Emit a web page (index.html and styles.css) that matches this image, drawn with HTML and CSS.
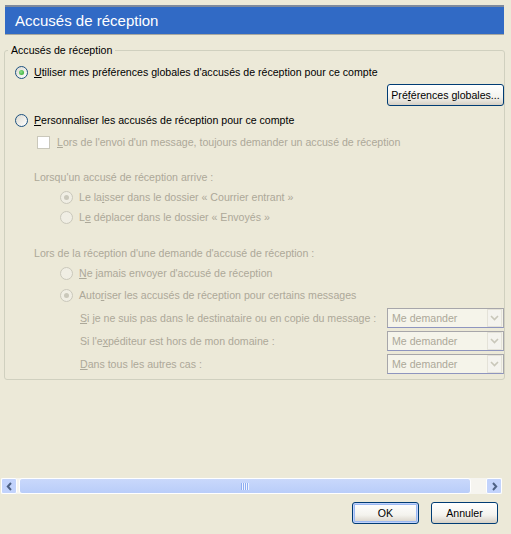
FILE: index.html
```html
<!DOCTYPE html>
<html lang="fr">
<head>
    <meta charset="UTF-8">
    <title>Accusés de réception</title>
    <link rel="stylesheet" href="styles.css">
</head>
<body>
    <div class="titlebar">Accusés de réception</div>

    <fieldset class="group">
        <legend>Accusés de réception</legend>

        <div class="row opt first">
            <span class="radio checked"></span>
            <span><u>U</u>tiliser mes préférences globales d'accusés de réception pour ce compte</span>
        </div>
        <div class="row btn-row">
            <button class="btn wide">Pré<u>f</u>érences globales...</button>
        </div>
        <div class="row opt second">
            <span class="radio"></span>
            <span><u>P</u>ersonnaliser les accusés de réception pour ce compte</span>
        </div>
        <div class="row opt check-row dim">
            <span class="check"></span>
            <span><u>L</u>ors de l'envoi d'un message, toujours demander un accusé de réception</span>
        </div>

        <div class="row caption dim">Lorsqu'un accusé de réception arrive :</div>
        <div class="row opt sub dim">
            <span class="radio off checked"></span>
            <span>Le la<u>i</u>sser dans le dossier « Courrier entrant »</span>
        </div>
        <div class="row opt sub dim">
            <span class="radio off"></span>
            <span>L<u>e</u> déplacer dans le dossier « Envoyés »</span>
        </div>

        <div class="row caption gap dim">Lors de la réception d'une demande d'accusé de réception :</div>
        <div class="row opt sub dim">
            <span class="radio off"></span>
            <span><u>N</u>e jamais envoyer d'accusé de réception</span>
        </div>
        <div class="row opt sub near dim">
            <span class="radio off checked"></span>
            <span>Auto<u>r</u>iser les accusés de réception pour certains messages</span>
        </div>

        <div class="rule dim">
            <span><u>S</u>i je ne suis pas dans le destinataire ou en copie du message :</span>
            <div class="combo"><span>Me demander</span><span class="arrow"><svg width="9" height="6" viewBox="0 0 9 6"><path d="M1 1l3.5 3.5L8 1" fill="none" stroke="#c9c7ba" stroke-width="1.6"/></svg></span></div>
        </div>
        <div class="rule dim">
            <span>Si l'e<u>x</u>péditeur est hors de mon domaine :</span>
            <div class="combo"><span>Me demander</span><span class="arrow"><svg width="9" height="6" viewBox="0 0 9 6"><path d="M1 1l3.5 3.5L8 1" fill="none" stroke="#c9c7ba" stroke-width="1.6"/></svg></span></div>
        </div>
        <div class="rule dim">
            <span><u>D</u>ans tous les autres cas :</span>
            <div class="combo"><span>Me demander</span><span class="arrow"><svg width="9" height="6" viewBox="0 0 9 6"><path d="M1 1l3.5 3.5L8 1" fill="none" stroke="#c9c7ba" stroke-width="1.6"/></svg></span></div>
        </div>
    </fieldset>

    <div class="hscroll">
        <span class="sb-btn"><svg width="7" height="9" viewBox="0 0 7 9"><path d="M5 1L1.8 4.5 5 8" fill="none" stroke="#4d6185" stroke-width="2"/></svg></span>
        <div class="thumb"><span class="grip"></span></div>
        <span class="sb-btn"><svg width="7" height="9" viewBox="0 0 7 9"><path d="M2 1l3.2 3.5L2 8" fill="none" stroke="#4d6185" stroke-width="2"/></svg></span>
    </div>

    <div class="actions">
        <button class="btn dlg default">OK</button>
        <button class="btn dlg">Annuler</button>
    </div>
</body>
</html>
```

FILE: styles.css
```css
body {
    margin: 0;
    width: 511px;
    height: 534px;
    overflow: hidden;
    background: #ece9d8;
    font-family: 'Liberation Sans', Arial, sans-serif;
    font-size: 10.6px;
    color: #000;
    white-space: nowrap;
}
u { text-decoration: underline; text-underline-offset: 1px; }

.titlebar {
    margin: 5px 7px 0 5px;
    height: 27px;
    padding-left: 10px;
    background: #316ac5;
    border-top: 2px solid #7f8a9c;
    border-bottom: 1px solid #a8a8a0;
    color: #fff;
    font-size: 15px;
    line-height: 28px;
}

.group {
    margin: 9px 8px 0 4px;
    padding: 0 0 5px 0;
    border: 1px solid #d0d0bf;
    border-radius: 3px;
}
.group legend {
    margin-left: 3px;
    padding: 0 3px;
    line-height: 13px;
}

.row { display: flex; align-items: center; height: 20px; }
.opt { gap: 6px; }
.first { margin-top: 5px; padding-left: 10px; }
.btn-row { justify-content: flex-end; height: 22px; margin-top: 2px; }
.second { margin-top: 4px; padding-left: 10px; }
.check-row { margin-top: 2px; padding-left: 32px; gap: 7px; }
.caption { margin-top: 15px; padding-left: 29px; }
.caption.gap { margin-top: 16px; }
.sub { padding-left: 55px; }
.near { margin-top: 2px; }
.dim { color: #aca899; }

.radio {
    width: 11px;
    height: 11px;
    border: 1px solid #1c5180;
    border-radius: 50%;
    background: linear-gradient(135deg, #dcdad0, #fff);
    display: flex;
    align-items: center;
    justify-content: center;
    flex: none;
}
.radio.checked::after {
    content: "";
    width: 5px;
    height: 5px;
    border-radius: 50%;
    background: radial-gradient(circle at 40% 40%, #8fe08f, #21a121);
}
.radio.off { border-color: #cac8bb; background: #f0eee4; }
.radio.off.checked::after { background: #cac8bb; }

.check {
    width: 11px;
    height: 11px;
    border: 1px solid #cac8bb;
    background: #fff;
    flex: none;
}

.rule {
    display: grid;
    grid-template-columns: 307px 117px;
    align-items: center;
    height: 20px;
    margin-top: 3px;
    padding-left: 75px;
}
.combo {
    height: 18px;
    border: 1px solid #a7a6aa;
    border-bottom-color: #8e95bf;
    background: #f5f4ea;
    display: flex;
    align-items: center;
    justify-content: space-between;
    padding-left: 4px;
}
.combo .arrow {
    width: 13px;
    height: 16px;
    margin-right: 1px;
    border: 1px solid #e4e2d8;
    background: #f4f3ee;
    display: flex;
    align-items: center;
    justify-content: center;
}

.btn {
    font-family: inherit;
    font-size: 10.6px;
    color: #000;
    border: 1px solid #003c74;
    border-radius: 3px;
    background: linear-gradient(#fff, #f4f3ee 60%, #d6d0c5);
    padding: 0;
}
.wide { width: 117px; height: 22px; }

.hscroll {
    display: flex;
    align-items: center;
    gap: 2px;
    height: 16px;
    margin: 98px 9px 0 1px;
    background: #f6f5f0;
}
.sb-btn {
    width: 14px;
    height: 14px;
    border: 1px solid #fff;
    border-radius: 2px;
    background: #c2d3fc;
    display: flex;
    align-items: center;
    justify-content: center;
    flex: none;
}
.thumb {
    width: 450px;
    height: 14px;
    border: 1px solid #fff;
    border-radius: 3px;
    background: linear-gradient(#c9d8fb, #b9cdf9);
    display: flex;
    align-items: center;
    justify-content: center;
    margin-right: auto;
}
.grip {
    width: 8px;
    height: 7px;
    background: repeating-linear-gradient(90deg, #8faef2 0 1px, #eef3ff 1px 2px);
}

.actions {
    display: flex;
    justify-content: flex-end;
    gap: 12px;
    margin: 8px 13px 0 0;
}
.dlg { width: 67px; height: 22px; }
.default { box-shadow: inset 0 0 0 1px #c2d3fc, inset 0 0 0 2px #9ab8f2; }
```
